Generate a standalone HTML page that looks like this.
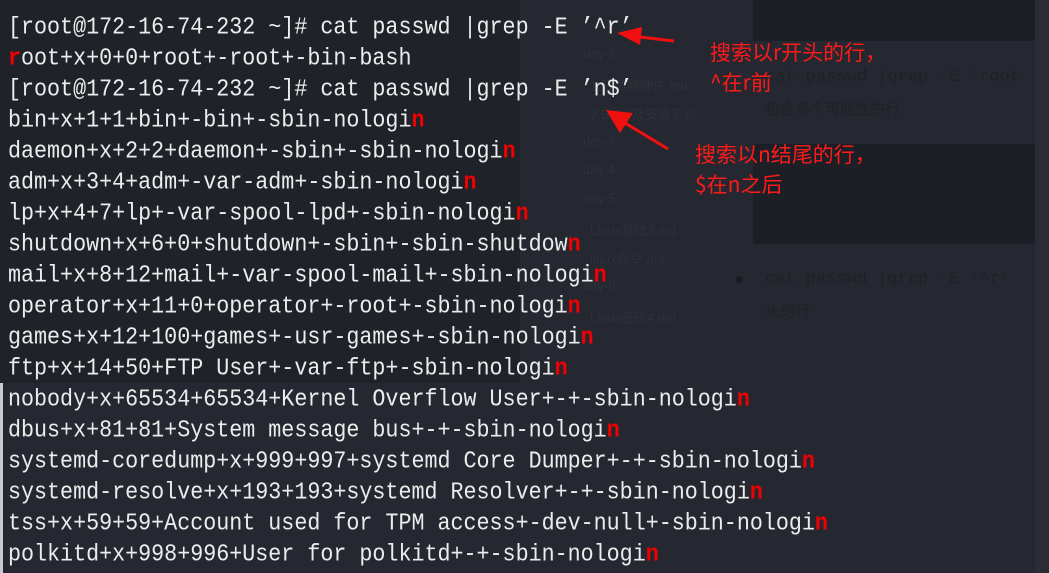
<!DOCTYPE html>
<html><head><meta charset="utf-8"><style>
html,body{margin:0;padding:0}
body{width:1049px;height:573px;overflow:hidden;background:#252830;position:relative;font-family:"Liberation Mono","Noto Sans CJK SC",monospace}
.abs{position:absolute}
.term div{position:absolute;left:8px;font-size:21.7px;color:#ececec;white-space:pre;transform:scaleY(1.1);transform-origin:left center;line-height:24px}
.term b{color:#f00000;font-weight:bold}
.ann{position:absolute;color:#ff1a1a;font-family:"Noto Sans CJK SC",sans-serif;font-size:21px;line-height:30px;white-space:pre}
.side{position:absolute;color:#2e3139;font-family:"Liberation Sans","Noto Sans CJK SC",sans-serif;font-size:13px}
.ghost{position:absolute;color:#1e2126;font-family:"Liberation Mono","Noto Sans CJK SC",monospace;font-size:17px;white-space:pre}
</style></head><body>
<div class="abs" style="left:0;top:0;width:520px;height:383px;background:#1f2228"></div>
<div class="abs" style="left:0;top:383px;width:3px;height:190px;background:#c8cacf"></div>
<div class="abs" style="left:753px;top:0;width:282px;height:41px;background:#1c1f25"></div>
<div class="abs" style="left:753px;top:144px;width:282px;height:100px;background:#1c1f25"></div>
<div class="abs" style="left:1035px;top:0;width:14px;height:573px;background:#2a2d35"></div>
<div class="ghost" style="left:765px;top:68px">cat passwd |grep -E 'root</div>
<div class="ghost" style="left:765px;top:270px">cat passwd |grep -E '^r'</div>
<div class="ghost" style="left:765px;top:98px;font-size:15px;font-family:'Noto Sans CJK SC',sans-serif">包含多个可能性的行</div>
<div class="ghost" style="left:765px;top:300px;font-size:15px;font-family:'Noto Sans CJK SC',sans-serif">头的行</div>
<div class="abs" style="left:736px;top:276px;width:7px;height:7px;border-radius:50%;background:#1a1c21"></div>
<div class="side" style="left:583px;top:46px">day-2</div>
<div class="side" style="left:590px;top:75px">1.服务器硬件.md</div>
<div class="side" style="left:590px;top:104px">2.BIOS及安装系统</div>
<div class="side" style="left:583px;top:133px">day-3</div>
<div class="side" style="left:583px;top:162px">day-4</div>
<div class="side" style="left:583px;top:191px">day-5</div>
<div class="side" style="left:590px;top:220px">Linux基础3.md</div>
<div class="side" style="left:590px;top:249px">linux命令.md</div>
<div class="side" style="left:583px;top:278px">day-6</div>
<div class="side" style="left:590px;top:307px">Linux基础4.md</div>
<div class="term">
<div style="top:16px">[root@172-16-74-232 ~]# cat passwd |grep -E ’^r’</div>
<div style="top:47px"><b>r</b>oot+x+0+0+root+-root+-bin-bash</div>
<div style="top:78px">[root@172-16-74-232 ~]# cat passwd |grep -E ’n$’</div>
<div style="top:109px">bin+x+1+1+bin+-bin+-sbin-nologi<b>n</b></div>
<div style="top:140px">daemon+x+2+2+daemon+-sbin+-sbin-nologi<b>n</b></div>
<div style="top:171px">adm+x+3+4+adm+-var-adm+-sbin-nologi<b>n</b></div>
<div style="top:202px">lp+x+4+7+lp+-var-spool-lpd+-sbin-nologi<b>n</b></div>
<div style="top:233px">shutdown+x+6+0+shutdown+-sbin+-sbin-shutdow<b>n</b></div>
<div style="top:264px">mail+x+8+12+mail+-var-spool-mail+-sbin-nologi<b>n</b></div>
<div style="top:295px">operator+x+11+0+operator+-root+-sbin-nologi<b>n</b></div>
<div style="top:326px">games+x+12+100+games+-usr-games+-sbin-nologi<b>n</b></div>
<div style="top:357px">ftp+x+14+50+FTP User+-var-ftp+-sbin-nologi<b>n</b></div>
<div style="top:388px">nobody+x+65534+65534+Kernel Overflow User+-+-sbin-nologi<b>n</b></div>
<div style="top:419px">dbus+x+81+81+System message bus+-+-sbin-nologi<b>n</b></div>
<div style="top:450px">systemd-coredump+x+999+997+systemd Core Dumper+-+-sbin-nologi<b>n</b></div>
<div style="top:481px">systemd-resolve+x+193+193+systemd Resolver+-+-sbin-nologi<b>n</b></div>
<div style="top:512px">tss+x+59+59+Account used for TPM access+-dev-null+-sbin-nologi<b>n</b></div>
<div style="top:543px">polkitd+x+998+996+User for polkitd+-+-sbin-nologi<b>n</b></div>
</div>
<svg class="abs" style="left:0;top:0" width="1049" height="573">
<line x1="674" y1="41" x2="640" y2="37" stroke="#f01010" stroke-width="3"/>
<polygon points="617,33 642,27 640,45" fill="#f01010"/>
<line x1="668" y1="149" x2="625" y2="123" stroke="#f01010" stroke-width="3"/>
<polygon points="606,110 633,113 620,133" fill="#f01010"/>
</svg>
<div class="ann" style="left:710px;top:37px">搜索以r开头的行，
^在r前</div>
<div class="ann" style="left:695px;top:139px">搜索以n结尾的行，
$在n之后</div>
</body></html>
